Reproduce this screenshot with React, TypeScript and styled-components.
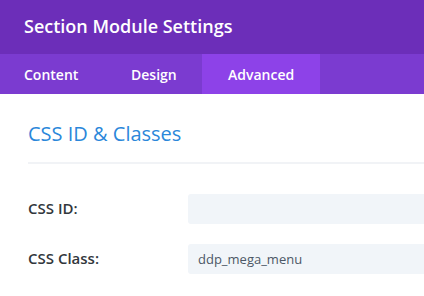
import React from "react";
import styled, { createGlobalStyle } from "styled-components";

const Global = createGlobalStyle`
  html, body { margin: 0; padding: 0; background: #ffffff; }
  body { font-family: "Open Sans", "Noto Sans", sans-serif; overflow: hidden; }
  * { box-sizing: border-box; }
`;

const Panel = styled.div`
  width: 424px;
  height: 296px;
  display: flex;
  flex-direction: column;
  background: #fff;
  overflow: hidden;
`;

const Header = styled.div`
  height: 54px;
  background: #6c2eb9;
  display: flex;
  align-items: center;
  padding: 0 24px 2px;
  color: #fff;
  font-size: 18px;
  font-weight: 600;
`;

const TabBar = styled.div`
  height: 40px;
  background: #7b3bd0;
  display: flex;
`;

const Tab = styled.div<{ $active?: boolean; $w: number; $pl: number }>`
  width: ${(p) => p.$w}px;
  padding-left: ${(p) => p.$pl}px;
  display: flex;
  align-items: center;
  color: #fff;
  font-size: 14px;
  font-weight: 600;
  background: ${(p) => (p.$active ? "#8d42e8" : "transparent")};
`;

const Body = styled.div`
  padding: 26px 0 0 28px;
  display: flex;
  flex-direction: column;
`;

const SectionTitle = styled.div`
  color: #2b87da;
  font-size: 20px;
  font-weight: 400;
  line-height: 27px;
  height: 27px;
`;

const Divider = styled.div`
  margin-top: 15px;
  height: 2px;
  background: #f1f3f6;
`;

const Row = styled.div<{ $mt: number }>`
  margin-top: ${(p) => p.$mt}px;
  display: grid;
  grid-template-columns: 160px 1fr;
  align-items: center;
`;

const Label = styled.div`
  color: #32373c;
  font-size: 15px;
  font-weight: 600;
  padding-bottom: 2px;
`;

const Input = styled.div`
  height: 30px;
  background: #f1f5f9;
  border-radius: 3px 0 0 3px;
  display: flex;
  align-items: center;
  padding-left: 10px;
  color: #4c5866;
  font-size: 13px;
  font-weight: 500;
`;

export default function App() {
  return (
    <>
      <Global />
      <Panel>
        <Header>Section Module Settings</Header>
        <TabBar>
          <Tab $w={107} $pl={24}>Content</Tab>
          <Tab $w={95} $pl={24}>Design</Tab>
          <Tab $w={118} $pl={26} $active>Advanced</Tab>
        </TabBar>
        <Body>
          <SectionTitle>CSS ID &amp; Classes</SectionTitle>
          <Divider />
          <Row $mt={30}>
            <Label>CSS ID:</Label>
            <Input />
          </Row>
          <Row $mt={20}>
            <Label>CSS Class:</Label>
            <Input>ddp_mega_menu</Input>
          </Row>
        </Body>
      </Panel>
    </>
  );
}
